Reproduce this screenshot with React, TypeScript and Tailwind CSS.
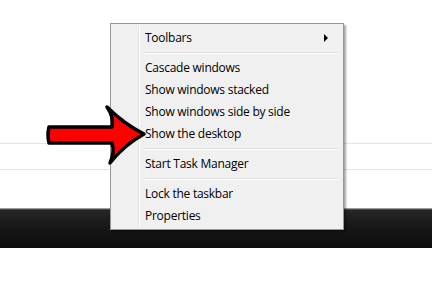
import React from "react";

const Sep = () => (
  <div className="h-[8px] flex items-center pl-[30px] pr-[2px]">
    <div className="w-full">
      <div className="h-px bg-[#e0e0e0]" />
      <div className="h-px bg-white" />
    </div>
  </div>
);

const Item = ({ label, sub }: { label: string; sub?: boolean }) => (
  <div className="h-[22px] flex items-center pl-[32px] pr-[12px] text-[12px] text-black leading-none">
    <span className="flex-1">{label}</span>
    {sub && (
      <svg width="5" height="8" viewBox="0 0 5 8">
        <path d="M0 0 L4 4 L0 8 Z" fill="#000" />
      </svg>
    )}
  </div>
);

export default function App() {
  return (
    <div
      className="relative w-[432px] h-[300px] bg-white overflow-hidden"
      style={{ fontFamily: '"Open Sans", "Noto Sans", sans-serif' }}
    >
      {/* background flow */}
      <div className="h-[143px]" />
      <div className="h-px bg-[#e4e4e4]" />
      <div className="h-[25px]" />
      <div className="h-px bg-[#e4e4e4]" />
      <div className="h-[38px]" />
      <div className="h-[40px] flex flex-col">
        <div className="h-px bg-[#9a9a9a]" />
        <div className="h-px bg-[#4a4a4a]" />
        <div className="flex-1 bg-gradient-to-b from-[#262626] via-[#161616] to-[#0e0e0e]" />
      </div>
      <div className="h-[52px]" />

      {/* context menu */}
      <div className="absolute left-[110px] top-[23px] w-[234px] h-[207px] border border-[#979797] bg-[#f0f0f0] shadow-[2px_2px_2px_rgba(0,0,0,0.35)] pt-[3px] pb-[2px] px-[2px]">
        <div className="absolute left-[27px] top-[2px] bottom-[2px] w-px bg-[#e2e3e3]" />
        <div className="absolute left-[28px] top-[2px] bottom-[2px] w-px bg-white" />
        <div className="relative" style={{ letterSpacing: "-0.25px" }}>
          <Item label="Toolbars" sub />
          <Sep />
          <Item label="Cascade windows" />
          <Item label="Show windows stacked" />
          <Item label="Show windows side by side" />
          <Item label="Show the desktop" />
          <Sep />
          <Item label="Start Task Manager" />
          <Sep />
          <Item label="Lock the taskbar" />
          <Item label="Properties" />
        </div>
      </div>

      {/* red arrow */}
      <svg
        className="absolute left-[40px] top-[100px]"
        width="112"
        height="70"
        viewBox="0 0 112 70"
      >
        <path
          d="M9 27 L72 27 Q74 17 67 7 Q84 24 104 34 Q84 45 70 63 Q75 52 72 43 L9 43 Q7 35 9 27 Z"
          fill="#ff0000"
          stroke="#000"
          strokeWidth="3.5"
          strokeLinejoin="round"
        />
      </svg>
    </div>
  );
}
